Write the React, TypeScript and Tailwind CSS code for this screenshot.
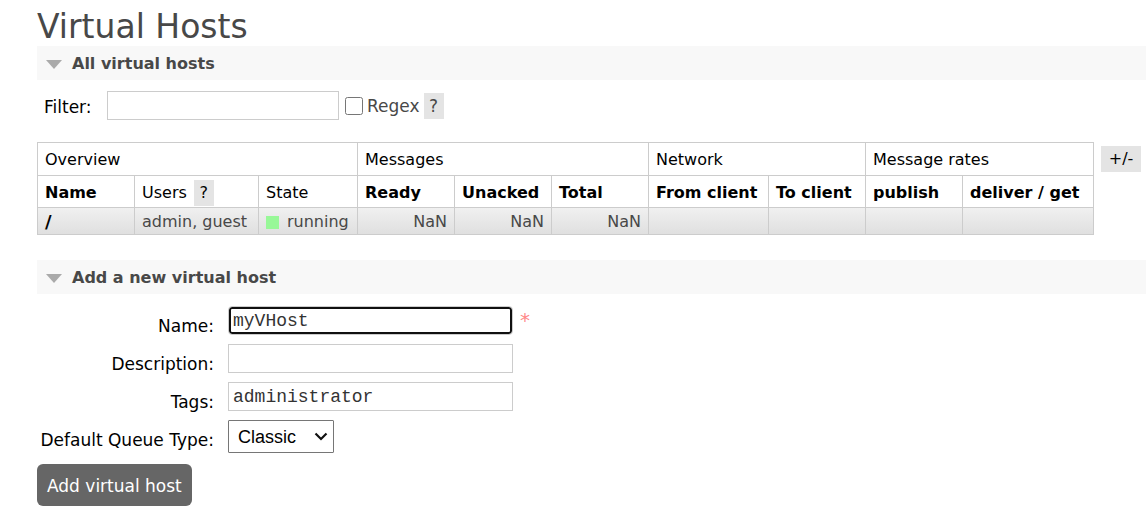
import { useState } from "react";
import type { ReactNode } from "react";

const groups = [
  { label: "Overview", span: 3 },
  { label: "Messages", span: 3 },
  { label: "Network", span: 2 },
  { label: "Message rates", span: 2 },
];

const cell = "border border-[#ccc] px-[7px] pt-[2px] whitespace-nowrap";

function Section({ title, children }: { title: string; children: ReactNode }) {
  const [open, setOpen] = useState(true);
  return (
    <section>
      <h2 className="bg-[#f8f8f8] font-bold text-[#484848]">
        <button
          type="button"
          aria-expanded={open}
          onClick={() => setOpen(!open)}
          className="flex h-[34px] w-full items-center gap-[10px] pt-[2px] pl-[9px] text-left"
        >
          <svg width="16" height="9" viewBox="0 0 16 9" className={open ? "" : "-rotate-90"} aria-hidden="true">
            <path d="M0 0H16L8 9Z" fill="#aaa" />
          </svg>
          {title}
        </button>
      </h2>
      {open && children}
    </section>
  );
}

function Help({ label }: { label: string }) {
  return (
    <button type="button" aria-label={label} className="h-[26px] w-5 bg-[#e4e4e4] text-center font-normal">
      ?
    </button>
  );
}

function Head({ children }: { children: ReactNode }) {
  return (
    <th scope="col" className={`${cell} text-left font-bold`}>
      {children}
    </th>
  );
}

function Field({ id, label, children }: { id: string; label: string; children: ReactNode }) {
  return (
    <div className="flex items-start">
      <label htmlFor={id} className="w-[177px] pt-[11px] text-right text-[17px] leading-[18px] whitespace-nowrap text-black">
        {label}
      </label>
      <div className="flex gap-[7px] pl-[14px]">{children}</div>
    </div>
  );
}

const textInput =
  "h-[29px] w-[285px] border border-[#ccc] px-1 font-['Liberation_Mono','Courier_New',monospace] text-[18px] text-[#333] outline-none";

export default function App() {
  return (
    <main className="bg-white pl-[37px] font-['DejaVu_Sans',Verdana,sans-serif] text-[16px] leading-[22px] text-[#484848]">
      <h1 className="pt-[8px] text-[33px] leading-[38px]">Virtual Hosts</h1>
      <Section title="All virtual hosts">
        <div className="flex items-center pt-[11px] pl-[7px] text-[17px]">
          <label htmlFor="filter" className="w-[63px] pt-[2px] text-black">
            Filter:
          </label>
          <input id="filter" type="text" className="h-[29px] w-[232px] border border-[#ccc] px-1 outline-none" />
          <input id="regex" type="checkbox" className="mr-1 ml-[6px] size-[18px]" />
          <label htmlFor="regex" className="mr-1">
            Regex
          </label>
          <Help label="Filter help" />
        </div>
        <div className="flex items-start gap-[7px] pt-[22px] pb-[25px]">
          <table className="w-[1057px] shrink-0 table-fixed border-collapse text-black">
            <colgroup>
              <col className="w-[97px]" />
              <col className="w-[124px]" />
              <col className="w-[99px]" />
              <col className="w-[97px]" />
              <col className="w-[97px]" />
              <col className="w-[97px]" />
              <col className="w-[120px]" />
              <col className="w-[97px]" />
              <col className="w-[97px]" />
              <col className="w-[131px]" />
            </colgroup>
            <thead>
              <tr className="h-[33px]">
                {groups.map((group) => (
                  <th key={group.label} scope="colgroup" colSpan={group.span} className={`${cell} text-left font-normal`}>
                    {group.label}
                  </th>
                ))}
              </tr>
              <tr className="h-8">
                <Head>Name</Head>
                <th scope="col" className={`${cell} text-left font-normal`}>
                  <div className="flex items-center gap-[7px]">
                    Users <Help label="Users help" />
                  </div>
                </th>
                <th scope="col" className={`${cell} text-left font-normal`}>
                  State
                </th>
                <Head>Ready</Head>
                <Head>Unacked</Head>
                <Head>Total</Head>
                <Head>From client</Head>
                <Head>To client</Head>
                <Head>publish</Head>
                <Head>deliver / get</Head>
              </tr>
            </thead>
            <tbody>
              <tr className="h-[27px] bg-linear-to-b from-[#f0f0f0] to-[#dfdfdf] text-[#484848]">
                <td className={cell}>
                  <a href="#vhost" className="text-[18px] font-bold text-black">
                    /
                  </a>
                </td>
                <td className={cell}>admin, guest</td>
                <td className={cell}>
                  <div className="flex items-center gap-2">
                    <span className="size-[13px] bg-[#98f898]" />
                    running
                  </div>
                </td>
                <td className={`${cell} text-right`}>NaN</td>
                <td className={`${cell} text-right`}>NaN</td>
                <td className={`${cell} text-right`}>NaN</td>
                <td className={cell} />
                <td className={cell} />
                <td className={cell} />
                <td className={cell} />
              </tr>
            </tbody>
          </table>
          <button type="button" aria-label="Choose columns" className="mt-1 h-[26px] w-10 shrink-0 bg-[#e4e4e4] text-black">
            +/-
          </button>
        </div>
      </Section>
      <Section title="Add a new virtual host">
        <form className="pt-3" onSubmit={(event) => event.preventDefault()}>
          <div className="flex flex-col gap-[9px]">
            <Field id="name" label="Name:">
              <input
                id="name"
                type="text"
                defaultValue="myVHost"
                required
                className={`${textInput} rounded-[4px] border-[#101010] ring-2 ring-[#101010] ring-inset`}
              />
              <span className="text-[20px] leading-[28px] text-[#ff8888]">*</span>
            </Field>
            <Field id="description" label="Description:">
              <input id="description" type="text" className={textInput} />
            </Field>
            <Field id="tags" label="Tags:">
              <input id="tags" type="text" defaultValue="administrator" className={textInput} />
            </Field>
            <Field id="queue-type" label="Default Queue Type:">
              <div className="relative">
                <select
                  id="queue-type"
                  className="block h-[33px] w-[106px] appearance-none rounded-[1px] border border-[#767676] bg-white px-[9px] font-['Liberation_Sans',Arial,sans-serif] text-[18px] text-black"
                >
                  <option>Classic</option>
                  <option>Quorum</option>
                  <option>Stream</option>
                </select>
                <svg
                  width="14"
                  height="9"
                  viewBox="0 0 14 9"
                  className="pointer-events-none absolute top-3 right-[6px]"
                  fill="none"
                  stroke="#111"
                  strokeWidth="2.2"
                  aria-hidden="true"
                >
                  <path d="M1.5 1.5L7 7L12.5 1.5" />
                </svg>
              </div>
            </Field>
          </div>
          <button type="submit" className="mt-[11px] h-[42px] rounded-md bg-[#666] px-[10px] pt-[2px] text-[17px] text-white">
            Add virtual host
          </button>
        </form>
      </Section>
    </main>
  );
}
